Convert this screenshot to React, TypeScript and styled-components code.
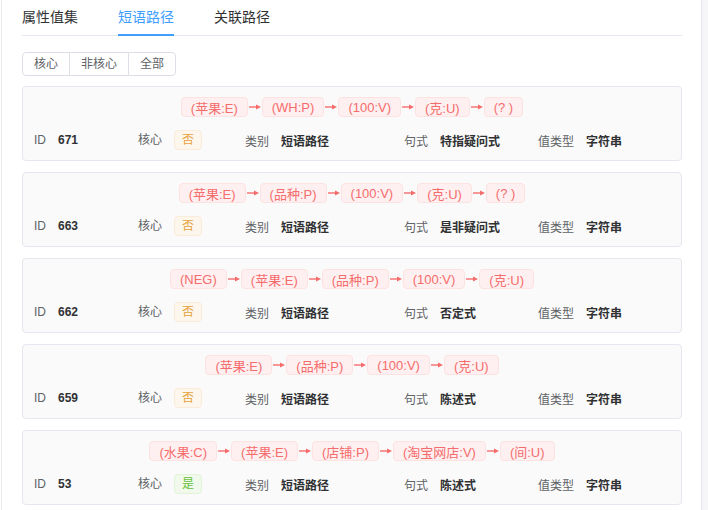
import { createGlobalStyle } from "styled-components";
import styled from "styled-components";

const GlobalStyle = createGlobalStyle`
    html, body {
        margin: 0;
        height: 510px;
        overflow: hidden;
        background: #fff;
        font-family: "Liberation Sans", "Noto Sans CJK SC", sans-serif;
    }
`;

type Item = {
    id: number;
    core: boolean;
    kind: string;
    pattern: string;
    valueType: string;
    path: string[];
};

const items: Item[] = [
    {
        id: 671,
        core: false,
        kind: "短语路径",
        pattern: "特指疑问式",
        valueType: "字符串",
        path: ["(苹果:E)", "(WH:P)", "(100:V)", "(克:U)", "(? )"],
    },
    {
        id: 663,
        core: false,
        kind: "短语路径",
        pattern: "是非疑问式",
        valueType: "字符串",
        path: ["(苹果:E)", "(品种:P)", "(100:V)", "(克:U)", "(? )"],
    },
    {
        id: 662,
        core: false,
        kind: "短语路径",
        pattern: "否定式",
        valueType: "字符串",
        path: ["(NEG)", "(苹果:E)", "(品种:P)", "(100:V)", "(克:U)"],
    },
    {
        id: 659,
        core: false,
        kind: "短语路径",
        pattern: "陈述式",
        valueType: "字符串",
        path: ["(苹果:E)", "(品种:P)", "(100:V)", "(克:U)"],
    },
    {
        id: 53,
        core: true,
        kind: "短语路径",
        pattern: "陈述式",
        valueType: "字符串",
        path: ["(水果:C)", "(苹果:E)", "(店铺:P)", "(淘宝网店:V)", "(间:U)"],
    },
];

const Page = styled.div`
    display: flex;
    height: 510px;
`;

const Panel = styled.div`
    width: 660px;
    margin-left: 1px;
    padding: 0 19px 0 20px;
    border-left: 1px solid #ebebf0;
    border-right: 1px solid #e6e6ec;
    overflow: hidden;
`;

const Gutter = styled.div`
    flex: 1;
    background: #f6f6f8;
`;

const TabBar = styled.div`
    display: flex;
    border-bottom: 1px solid #e4e7ed;
`;

const Tab = styled.div<{ $active?: boolean }>`
    position: relative;
    height: 35px;
    line-height: 35px;
    padding: 0 20px;
    font-size: 14px;
    color: ${(p) => (p.$active ? "#409eff" : "#303133")};

    &:first-child {
        padding-left: 0;
    }

    &::after {
        content: "";
        display: ${(p) => (p.$active ? "block" : "none")};
        position: absolute;
        left: 20px;
        right: 20px;
        bottom: -1px;
        height: 2px;
        background: #409eff;
    }
`;

const ButtonGroup = styled.div`
    display: flex;
    margin: 16px 0 10px;
`;

const GroupButton = styled.button`
    height: 24px;
    padding: 0 11px;
    margin: 0;
    border: 1px solid #dcdfe6;
    background: #fff;
    color: #606266;
    font-family: inherit;
    font-size: 12px;
    line-height: 22px;

    & + & {
        margin-left: -1px;
    }

    &:first-child {
        border-radius: 4px 0 0 4px;
    }

    &:last-child {
        border-radius: 0 4px 4px 0;
    }
`;

const CardList = styled.div`
    display: flex;
    flex-direction: column;
    gap: 11px;
`;

const Card = styled.div`
    padding: 10px 11px;
    background: #fafafa;
    border: 1px solid #e6e7ee;
    border-radius: 4px;
`;

const PathRow = styled.div`
    display: flex;
    justify-content: center;
    align-items: center;
`;

const PathTag = styled.span`
    height: 20px;
    padding: 0 9px;
    box-sizing: border-box;
    display: inline-flex;
    align-items: center;
    font-size: 13px;
    color: #f56c6c;
    background: #fef0f0;
    border: 1px solid #fde2e2;
    border-radius: 4px;
    white-space: pre;
`;

const ArrowIcon = styled.svg`
    display: block;
    margin: 0 1px;
`;

const InfoRow = styled.div`
    display: grid;
    grid-template-columns: 104px 107px 159px 134px 1fr;
    align-items: center;
    margin-top: 13px;
    height: 20px;
`;

const Field = styled.div`
    display: flex;
    align-items: baseline;
    gap: 12px;
    font-size: 12px;
`;

const Label = styled.span`
    color: #606266;
`;

const Value = styled.span`
    color: #303133;
    font-weight: bold;
`;

const CoreTag = styled.span<{ $yes: boolean }>`
    height: 20px;
    padding: 0 7px;
    box-sizing: border-box;
    display: inline-block;
    line-height: 18px;
    font-size: 12px;
    border-radius: 4px;
    color: ${(p) => (p.$yes ? "#67c23a" : "#e6a23c")};
    background: ${(p) => (p.$yes ? "#f0f9eb" : "#fdf6ec")};
    border: 1px solid ${(p) => (p.$yes ? "#e1f3d8" : "#faecd8")};
`;

function Arrow() {
    return (
        <ArrowIcon width="12" height="8" viewBox="0 0 12 8">
            <line x1="0" y1="4" x2="8" y2="4" stroke="#f56c6c" strokeWidth="1.4" />
            <polygon points="7,1.5 12,4 7,6.5" fill="#f56c6c" />
        </ArrowIcon>
    );
}

function PathPart({ node, first }: { node: string; first: boolean }) {
    return (
        <>
            {!first && <Arrow />}
            <PathTag>{node}</PathTag>
        </>
    );
}

function PathCard({ item }: { item: Item }) {
    return (
        <Card>
            <PathRow>
                {item.path.map((node, i) => (
                    <PathPart key={i} node={node} first={i === 0} />
                ))}
            </PathRow>
            <InfoRow>
                <Field>
                    <Label>ID</Label>
                    <Value>{item.id}</Value>
                </Field>
                <Field>
                    <Label>核心</Label>
                    <CoreTag $yes={item.core}>{item.core ? "是" : "否"}</CoreTag>
                </Field>
                <Field>
                    <Label>类别</Label>
                    <Value>{item.kind}</Value>
                </Field>
                <Field>
                    <Label>句式</Label>
                    <Value>{item.pattern}</Value>
                </Field>
                <Field>
                    <Label>值类型</Label>
                    <Value>{item.valueType}</Value>
                </Field>
            </InfoRow>
        </Card>
    );
}

export default function App() {
    return (
        <>
            <GlobalStyle />
            <Page>
                <Panel>
                    <TabBar>
                        <Tab>属性值集</Tab>
                        <Tab $active>短语路径</Tab>
                        <Tab>关联路径</Tab>
                    </TabBar>
                    <ButtonGroup>
                        <GroupButton>核心</GroupButton>
                        <GroupButton>非核心</GroupButton>
                        <GroupButton>全部</GroupButton>
                    </ButtonGroup>
                    <CardList>
                        {items.map((item) => (
                            <PathCard key={item.id} item={item} />
                        ))}
                    </CardList>
                </Panel>
                <Gutter />
            </Page>
        </>
    );
}
